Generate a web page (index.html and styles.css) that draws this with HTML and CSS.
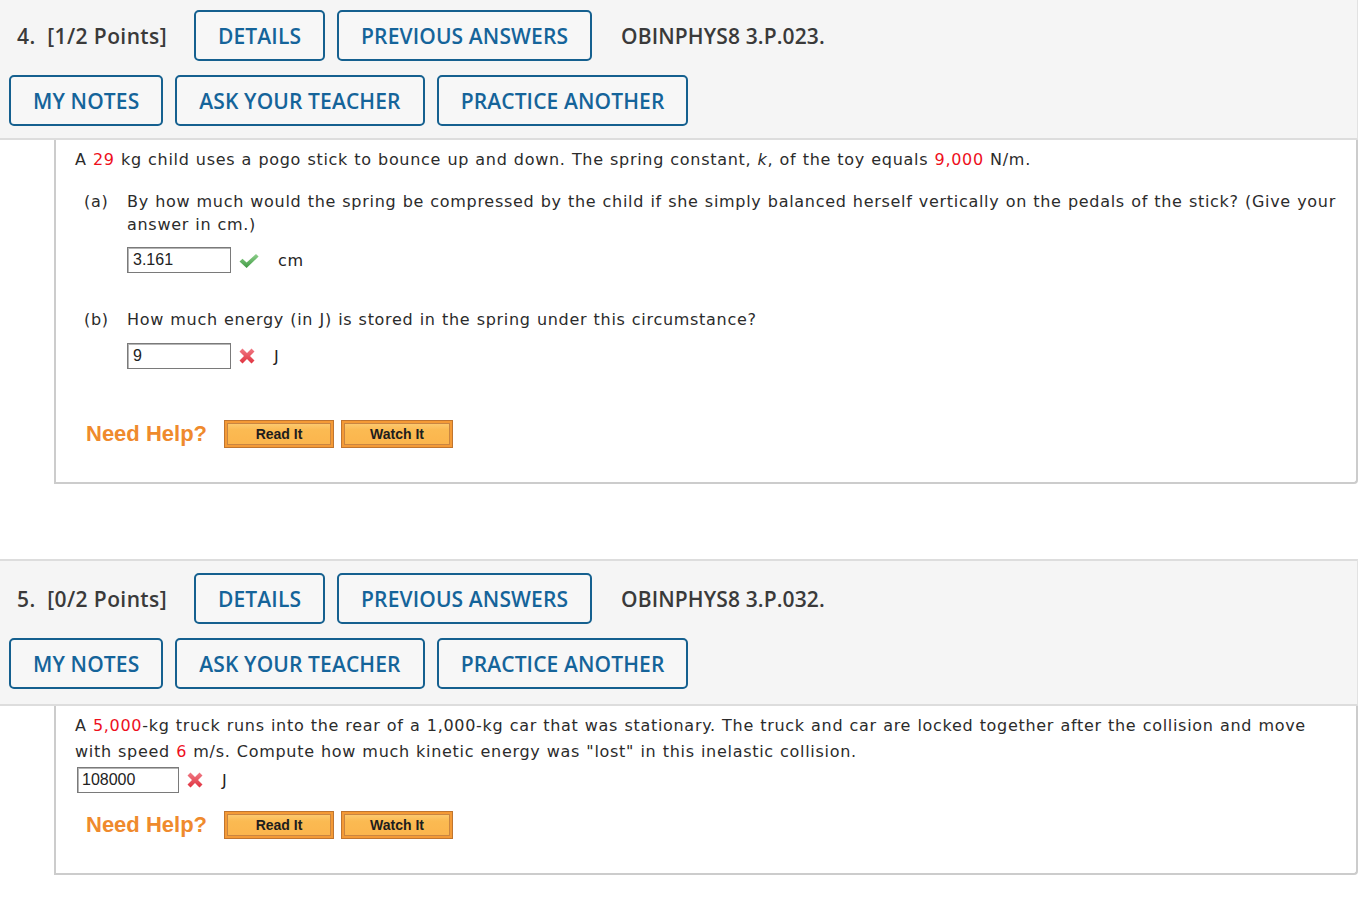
FILE: index.html
```html
<!DOCTYPE html>
<html lang="en">
<head>
<meta charset="utf-8">
<title>Questions</title>
<link rel="stylesheet" href="styles.css">
</head>
<body>
<div class="page">

  <section class="question">
    <header class="q-head">
      <div class="row">
        <span class="q-label">4.&nbsp; [1/2 Points]</span>
        <a class="btn">DETAILS</a>
        <a class="btn">PREVIOUS ANSWERS</a>
        <span class="q-code">OBINPHYS8 3.P.023.</span>
      </div>
      <div class="row">
        <a class="btn">MY NOTES</a>
        <a class="btn">ASK YOUR TEACHER</a>
        <a class="btn">PRACTICE ANOTHER</a>
      </div>
    </header>
    <div class="q-body q4-body">
      <p class="stem">A <span class="num">29</span> kg child uses a pogo stick to bounce up and down. The spring constant, <i>k</i>, of the toy equals <span class="num">9,000</span> N/m.</p>
      <div class="part part-a">
        <span class="part-label">(a)</span>
        <div class="part-main">
          <p class="part-text">By how much would the spring be compressed by the child if she simply balanced herself vertically on the pedals of the stick? (Give your answer in cm.)</p>
          <div class="answer">
            <span class="input">3.161</span>
            <svg class="icon-check" width="22" height="18" viewBox="0 0 22 18" aria-hidden="true">
              <defs><linearGradient id="gc" x1="0" y1="0" x2="0" y2="1"><stop offset="0" stop-color="#8fd08c"/><stop offset="1" stop-color="#3f9a43"/></linearGradient></defs>
              <path d="M1.5 9.5 L4.5 6.8 L8.6 10.6 L18 2 L20.6 4.6 L8.6 16 Z" fill="url(#gc)"/>
            </svg>
            <span class="unit">cm</span>
          </div>
        </div>
      </div>
      <div class="part part-b">
        <span class="part-label">(b)</span>
        <div class="part-main">
          <p class="part-text">How much energy (in J) is stored in the spring under this circumstance?</p>
          <div class="answer">
            <span class="input">9</span>
            <svg class="icon-x" width="20" height="20" viewBox="0 0 20 20" aria-hidden="true">
              <defs><linearGradient id="gx1" x1="0" y1="0" x2="0" y2="1"><stop offset="0" stop-color="#f07a85"/><stop offset="1" stop-color="#e0323f"/></linearGradient></defs>
              <path d="M2.5 5.5 L5.5 2.5 L10 7 L14.5 2.5 L17.5 5.5 L13 10 L17.5 14.5 L14.5 17.5 L10 13 L5.5 17.5 L2.5 14.5 L7 10 Z" fill="url(#gx1)"/>
            </svg>
            <span class="unit unit-j">J</span>
          </div>
        </div>
      </div>
      <div class="help help-4">
        <span class="need">Need Help?</span>
        <a class="hbtn">Read It</a>
        <a class="hbtn hbtn-wide">Watch It</a>
      </div>
    </div>
  </section>

  <section class="question second">
    <header class="q-head">
      <div class="row">
        <span class="q-label">5.&nbsp; [0/2 Points]</span>
        <a class="btn">DETAILS</a>
        <a class="btn">PREVIOUS ANSWERS</a>
        <span class="q-code">OBINPHYS8 3.P.032.</span>
      </div>
      <div class="row">
        <a class="btn">MY NOTES</a>
        <a class="btn">ASK YOUR TEACHER</a>
        <a class="btn">PRACTICE ANOTHER</a>
      </div>
    </header>
    <div class="q-body q5-body">
      <p class="stem stem-5">A <span class="num">5,000</span>-kg truck runs into the rear of a 1,000-kg car that was stationary. The truck and car are locked together after the collision and move with speed <span class="num">6</span> m/s. Compute how much kinetic energy was "lost" in this inelastic collision.</p>
      <div class="answer answer-5">
        <span class="input input-5">108000</span>
        <svg class="icon-x" width="20" height="20" viewBox="0 0 20 20" aria-hidden="true">
          <defs><linearGradient id="gx2" x1="0" y1="0" x2="0" y2="1"><stop offset="0" stop-color="#f07a85"/><stop offset="1" stop-color="#e0323f"/></linearGradient></defs>
          <path d="M2.5 5.5 L5.5 2.5 L10 7 L14.5 2.5 L17.5 5.5 L13 10 L17.5 14.5 L14.5 17.5 L10 13 L5.5 17.5 L2.5 14.5 L7 10 Z" fill="url(#gx2)"/>
        </svg>
        <span class="unit unit-j">J</span>
      </div>
      <div class="help help-5">
        <span class="need">Need Help?</span>
        <a class="hbtn">Read It</a>
        <a class="hbtn hbtn-wide">Watch It</a>
      </div>
    </div>
  </section>

</div>
</body>
</html>
```

FILE: styles.css
```css
html, body {
  margin: 0;
  padding: 0;
  background: #ffffff;
}

.page {
  width: 1358px;
  margin-top: -4px;
}

.question {
  display: block;
}

.question.second {
  margin-top: 75px;
}

.q-head {
  background: #f5f5f5;
  border-top: 2px solid #dddddd;
  border-bottom: 2px solid #dddddd;
  border-right: 1px solid #e2e2e2;
  padding: 12px 0 12px 9px;
  display: flex;
  flex-direction: column;
  gap: 14px;
  font-family: "Open Sans", "Liberation Sans", sans-serif;
  font-weight: 600;
  font-size: 21px;
  letter-spacing: 0.12px;
}

.second .q-head {
  padding-bottom: 15px;
}

.row {
  display: flex;
  align-items: center;
  gap: 12px;
}

.q-label {
  color: #3a3a3a;
  margin-left: 8px;
  margin-right: 15px;
  white-space: pre;
  letter-spacing: 0.4px;
}

.q-code {
  color: #3a3a3a;
  margin-left: 17px;
}

.btn {
  display: inline-flex;
  align-items: center;
  height: 47px;
  padding: 0 22px;
  border: 2px solid #15608f;
  border-radius: 5px;
  color: #15649a;
  background: #f7f7f7;
}

.q-body {
  margin-left: 54px;
  border: 2px solid #cccccc;
  border-top: 0;
  border-radius: 0 0 4px 0;
  background: #ffffff;
  font-family: "DejaVu Sans", Verdana, sans-serif;
  font-size: 16px;
  letter-spacing: 0.7px;
  word-spacing: 0.5px;
  color: #2b2b2b;
}

.q4-body {
  padding: 8px 20px 34px 19px;
}

.q5-body {
  padding: 7px 20px 34px 19px;
}

.stem {
  margin: 0;
  line-height: 24px;
}

.stem-5 {
  line-height: 26px;
}

.num {
  color: #ee0f1c;
}

.part {
  display: flex;
  padding-left: 9px;
}

.part-a {
  margin-top: 18px;
}

.part-b {
  margin-top: 35px;
}

.part-label {
  width: 43px;
  flex: none;
  line-height: 23px;
}

.part-main {
  flex: 1;
}

.part-text {
  margin: 0;
  line-height: 23px;
}

.answer {
  display: flex;
  align-items: center;
  height: 26px;
}

.part-a .answer {
  margin-top: 11px;
}

.part-b .answer {
  margin-top: 12px;
}

.answer-5 {
  margin-top: 2px;
  margin-left: 2px;
}

.input {
  box-sizing: border-box;
  width: 104px;
  height: 26px;
  border: 1px solid #7a7a7a;
  box-shadow: inset 1px 1px 0 #b5b5b5;
  padding: 0 5px;
  font-family: "Liberation Sans", Arial, sans-serif;
  font-size: 16px;
  letter-spacing: 0;
  word-spacing: 0;
  line-height: 24px;
  color: #222222;
  background: #ffffff;
}

.input-5 {
  width: 102px;
  padding-left: 4px;
}

.icon-check {
  margin-left: 7px;
  margin-top: 2px;
}

.icon-x {
  margin-left: 6px;
}

.unit {
  margin-left: 18px;
  color: #222222;
}

.unit-j {
  margin-left: 17px;
}

.help {
  display: flex;
  align-items: center;
  padding-left: 11px;
  letter-spacing: 0;
  word-spacing: 0;
}

.help-4 {
  margin-top: 51px;
}

.help-5 {
  margin-top: 18px;
}

.need {
  font-family: "Liberation Sans", Arial, sans-serif;
  font-weight: 700;
  font-size: 22px;
  color: #ef8a2d;
  margin-right: 17px;
}

.hbtn {
  box-sizing: border-box;
  display: inline-flex;
  align-items: center;
  justify-content: center;
  width: 110px;
  height: 28px;
  margin-right: 7px;
  border: 1px solid #c0752f;
  background: linear-gradient(#fdd07c 0%, #fbba52 35%, #fbb44c 100%);
  box-shadow: inset 0 0 0 2px #f49a36, inset 0 0 0 3px #c98541;
  font-family: "Liberation Sans", Arial, sans-serif;
  font-weight: 700;
  font-size: 14px;
  color: #1d1d1d;
}

.hbtn-wide {
  width: 112px;
}
```
